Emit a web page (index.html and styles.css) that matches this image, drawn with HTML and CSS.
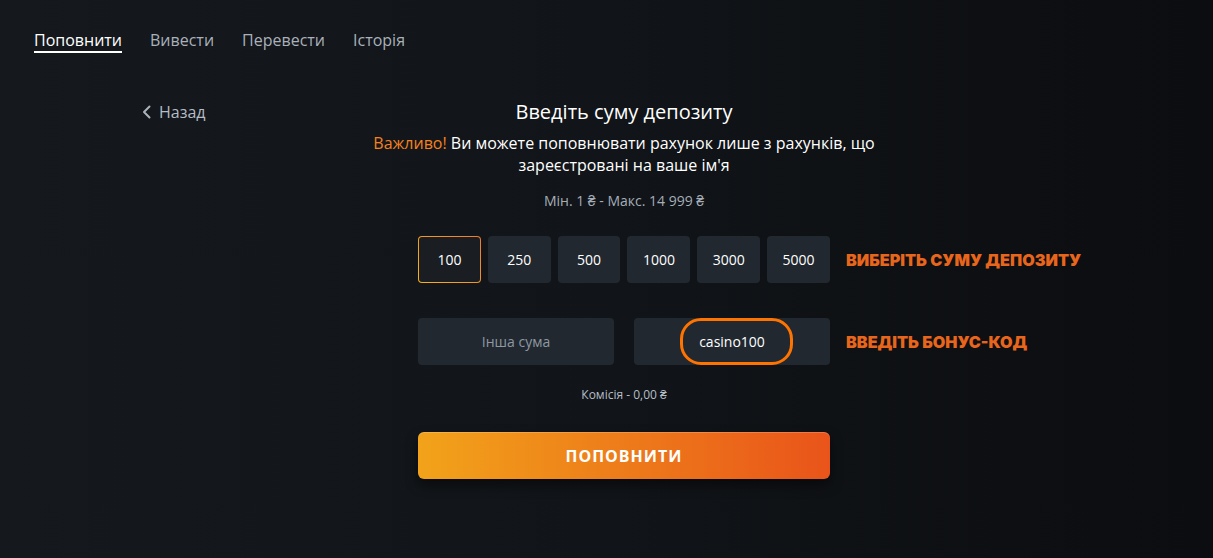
FILE: index.html
```html
<!DOCTYPE html>
<html lang="uk">
<head>
    <meta charset="UTF-8">
    <meta name="viewport" content="width=device-width, initial-scale=1.0">
    <title>Поповнити</title>
    <link rel="stylesheet" href="styles.css">
</head>
<body>
    <nav class="tabs">
        <a href="#" class="tab active">Поповнити</a>
        <a href="#" class="tab">Вивести</a>
        <a href="#" class="tab">Перевести</a>
        <a href="#" class="tab">Історія</a>
    </nav>

    <div class="page">
        <a href="#" class="back-link">
            <svg width="10" height="14" viewBox="0 0 10 14"><polyline points="7.5,1.5 2,7 7.5,12.5" fill="none" stroke="#aab2bb" stroke-width="2" stroke-linecap="round" stroke-linejoin="round"/></svg>
            Назад
        </a>

        <div class="deposit">
            <h1>Введіть суму депозиту</h1>
            <p class="warning"><span class="accent">Важливо!</span> Ви можете поповнювати рахунок лише з рахунків, що зареєстровані на ваше ім'я</p>
            <p class="limits">Мін. 1 ₴ - Макс. 14 999 ₴</p>

            <div class="row amounts">
                <button class="amount selected">100</button>
                <button class="amount">250</button>
                <button class="amount">500</button>
                <button class="amount">1000</button>
                <button class="amount">3000</button>
                <button class="amount">5000</button>
                <span class="callout">Виберіть суму депозиту</span>
            </div>

            <div class="row fields">
                <div class="field placeholder">Інша сума</div>
                <div class="field"><span class="code">casino100</span></div>
                <span class="callout">Введіть бонус-код</span>
            </div>

            <p class="fee">Комісія - 0,00 ₴</p>

            <button class="submit">Поповнити</button>
        </div>
    </div>
</body>
</html>
```

FILE: styles.css
```css
body {
    margin: 0;
    height: 100vh;
    font-family: "Open Sans", sans-serif;
    background: linear-gradient(90deg, #15181c 0%, #111418 50%, #0b0d10 100%);
    color: #fff;
}
.tabs {
    display: flex;
    gap: 28px;
    padding: 29px 34px 0;
}
.tab {
    font-size: 16px;
    line-height: 22px;
    color: #a9b1ba;
    text-decoration: none;
    border-bottom: 2px solid transparent;
}
.tab.active {
    color: #fff;
    border-bottom-color: #fff;
}
.page {
    display: flex;
    padding-left: 142px;
    margin-top: 45px;
}
.back-link {
    flex: none;
    width: 222px;
    display: flex;
    align-items: flex-start;
    gap: 7px;
    height: 28px;
    line-height: 28px;
    font-size: 16px;
    color: #b4bcc5;
    text-decoration: none;
}
.back-link svg {
    margin-top: 7px;
}
.deposit {
    width: 520px;
    display: flex;
    flex-direction: column;
    align-items: center;
    text-align: center;
}
h1 {
    margin: 0;
    font-size: 20px;
    line-height: 28px;
    font-weight: 400;
}
.warning {
    margin: 6px 0 0;
    font-size: 16px;
    line-height: 22px;
}
.accent {
    color: #f5821f;
}
.limits {
    margin: 16px 0 0;
    font-size: 14px;
    line-height: 18px;
    color: #a5aeb8;
}
.row {
    position: relative;
    width: 412px;
    display: flex;
}
.amounts {
    margin-top: 26px;
    gap: 7px;
}
.amount {
    flex: 1 1 0;
    min-width: 0;
    box-sizing: border-box;
    padding: 0;
    height: 47px;
    border: 1px solid transparent;
    border-radius: 4px;
    background: #22282f;
    color: #fff;
    font-family: "Open Sans", sans-serif;
    font-size: 14px;
    cursor: pointer;
}
.amount.selected {
    background: linear-gradient(#1a1e23, #1a1e23) padding-box,
                linear-gradient(45deg, #f6b417, #f07a2e) border-box;
}
.callout {
    position: absolute;
    left: calc(100% + 16px);
    top: 50%;
    transform: translateY(-50%);
    white-space: nowrap;
    font-family: Inter, sans-serif;
    font-weight: 900;
    font-size: 16.2px;
    text-transform: uppercase;
    color: #e8661c;
}
.fields {
    margin-top: 35px;
    gap: 20px;
}
.field {
    flex: 1 1 0;
    height: 47px;
    border-radius: 4px;
    background: #22282f;
    display: flex;
    align-items: center;
    justify-content: center;
    font-size: 14px;
}
.field.placeholder {
    color: #8d98a3;
}
.code {
    margin-left: 9px;
    padding: 11px 25px 11px 16px;
    border: 3px solid #ff7300;
    border-radius: 21px;
    line-height: 19px;
}
.fee {
    margin: 22px 0 0;
    font-size: 12px;
    line-height: 16px;
    color: #b6bec6;
}
.submit {
    margin-top: 29px;
    width: 412px;
    height: 47px;
    border: none;
    border-radius: 6px;
    background: linear-gradient(90deg, #f2a31a, #e9541a);
    box-shadow: inset 0 1px 0 rgba(255, 255, 255, 0.2), 0 6px 12px rgba(0, 0, 0, 0.5);
    color: #fff;
    font-family: "Open Sans", sans-serif;
    font-size: 16px;
    font-weight: 700;
    letter-spacing: 1px;
    text-transform: uppercase;
    cursor: pointer;
}
```
